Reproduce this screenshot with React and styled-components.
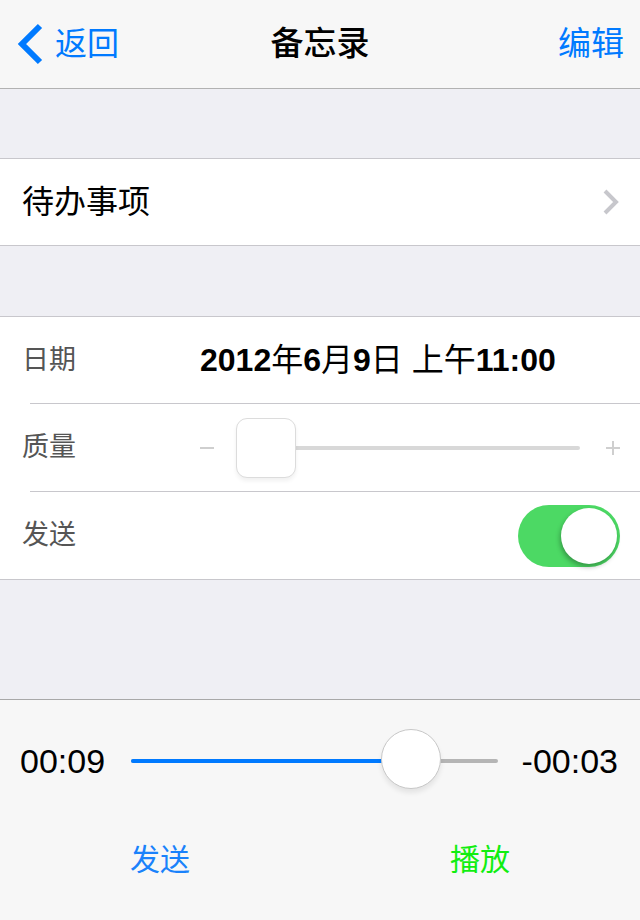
import React from 'react'
import styled, { createGlobalStyle } from 'styled-components'

const GlobalStyle = createGlobalStyle`
  html, body {
    margin: 0;
    padding: 0;
    background: #efeff4;
  }
  body {
    font-family: "Liberation Sans", "Noto Sans CJK SC", sans-serif;
    line-height: 1.2;
  }
`

const Page = styled.div`
  width: 640px;
  height: 920px;
  display: flex;
  flex-direction: column;
  background: #efeff4;
  overflow: hidden;
`

const NavBar = styled.div`
  height: 88px;
  flex-shrink: 0;
  display: grid;
  grid-template-columns: 1fr auto 1fr;
  align-items: center;
  background: #f7f7f7;
  border-bottom: 1px solid #b2b2b2;
`

const BackButton = styled.div`
  display: flex;
  align-items: center;
  gap: 12px;
  padding-left: 15px;
  color: #007aff;
  font-size: 32px;
`

const NavTitle = styled.div`
  font-size: 33px;
  font-weight: 500;
  color: #000;
`

const NavAction = styled.div`
  justify-self: end;
  padding-right: 16px;
  color: #007aff;
  font-size: 33px;
`

const Spacer = styled.div`
  height: ${p => p.h}px;
  flex-shrink: 0;
`

const Filler = styled.div`
  flex: 1;
`

const Group = styled.div`
  background: #fff;
  border-top: 1px solid #c8c7cc;
  border-bottom: 1px solid #c8c7cc;
  flex-shrink: 0;
`

const Row = styled.div`
  height: ${p => p.h || 86}px;
  display: flex;
  align-items: center;
  padding: 0 20px 0 22px;
`

const Divider = styled.div`
  height: 1px;
  margin-left: 30px;
  background: #c8c7cc;
`

const RowTitle = styled.div`
  flex: 1;
  font-size: 32px;
  color: #000;
`

const Label = styled.div`
  width: 178px;
  flex-shrink: 0;
  font-size: 27px;
  color: #555;
`

const DateValue = styled.div`
  font-size: 32px;
  color: #000;
`

const Num = styled.span`
  font-weight: 700;
`

const QualitySlider = styled.div`
  flex: 1;
  display: flex;
  align-items: center;
  gap: 22px;
`

const Sign = styled.div`
  width: 14px;
  height: 14px;
  position: relative;
  flex-shrink: 0;
  &::before {
    content: '';
    position: absolute;
    left: 0;
    right: 0;
    top: 6px;
    height: 2px;
    background: #cfcfcf;
  }
  &::after {
    content: '';
    display: ${p => (p.plus ? 'block' : 'none')};
    position: absolute;
    top: 0;
    bottom: 0;
    left: 6px;
    width: 2px;
    background: #cfcfcf;
  }
`

const SquareTrack = styled.div`
  flex: 1;
  height: 4px;
  border-radius: 2px;
  background: #d8d8d8;
  position: relative;
  margin-right: 4px;
`

const SquareThumb = styled.div`
  position: absolute;
  left: 0;
  top: -28px;
  width: 58px;
  height: 58px;
  border: 1px solid #dcdcdc;
  border-radius: 11px;
  background: #fff;
  box-shadow: 0 3px 4px rgba(0, 0, 0, 0.06);
`

const Toggle = styled.div`
  margin-left: auto;
  width: 102px;
  height: 62px;
  border-radius: 31px;
  background: #4cd964;
  display: flex;
  align-items: center;
  justify-content: flex-end;
  padding-right: 3px;
  box-sizing: border-box;
`

const Knob = styled.div`
  width: 56px;
  height: 56px;
  border-radius: 50%;
  background: #fff;
  box-shadow: -1px 3px 5px rgba(0, 0, 0, 0.3);
`

const Player = styled.div`
  height: 220px;
  flex-shrink: 0;
  background: #f7f7f7;
  border-top: 1px solid #a8a8a8;
  display: flex;
  flex-direction: column;
`

const TimeRow = styled.div`
  height: 122px;
  display: flex;
  align-items: center;
  padding: 0 22px 0 20px;
  gap: 26px;
`

const Time = styled.div`
  font-size: 34px;
  color: #000;
  flex-shrink: 0;
`

const Track = styled.div`
  flex: 1;
  height: 4px;
  border-radius: 2px;
  background: #b5b5b5;
  position: relative;
  margin-right: -2px;
`

const Fill = styled.div`
  height: 100%;
  border-radius: 2px;
  background: #007aff;
`

const RoundThumb = styled.div`
  position: absolute;
  top: -30px;
  width: 58px;
  height: 58px;
  margin-left: -29px;
  border: 1px solid #c8c8c8;
  border-radius: 50%;
  background: #fff;
  box-shadow: 0 4px 5px rgba(0, 0, 0, 0.08);
`

const Actions = styled.div`
  display: grid;
  grid-template-columns: 1fr 1fr;
  align-items: center;
  height: 76px;
`

const ActionButton = styled.div`
  text-align: center;
  font-size: 30px;
  color: ${p => p.color};
`

const BackChevron = () => (
  <svg width="28" height="42" viewBox="0 0 28 42">
    <polyline points="25,3 7,21 25,39" fill="none" stroke="#007aff" strokeWidth="6" />
  </svg>
)

const ChevronRight = () => (
  <svg width="18" height="26" viewBox="0 0 18 26">
    <polyline points="3,2 14,13 3,24" fill="none" stroke="#c7c7cc" strokeWidth="4" />
  </svg>
)

const progress = 76

export default function App() {
  return (
    <>
      <GlobalStyle />
      <Page>
        <NavBar>
          <BackButton>
            <BackChevron />
            <span>返回</span>
          </BackButton>
          <NavTitle>备忘录</NavTitle>
          <NavAction>编辑</NavAction>
        </NavBar>

        <Spacer h={69} />
        <Group>
          <Row>
            <RowTitle>待办事项</RowTitle>
            <ChevronRight />
          </Row>
        </Group>

        <Spacer h={70} />
        <Group>
          <Row>
            <Label>日期</Label>
            <DateValue>
              <Num>2012</Num>年<Num>6</Num>月<Num>9</Num>日 上午<Num>11:00</Num>
            </DateValue>
          </Row>
          <Divider />
          <Row h={87}>
            <Label>质量</Label>
            <QualitySlider>
              <Sign />
              <SquareTrack>
                <SquareThumb />
              </SquareTrack>
              <Sign plus />
            </QualitySlider>
          </Row>
          <Divider />
          <Row h={87}>
            <Label>发送</Label>
            <Toggle>
              <Knob />
            </Toggle>
          </Row>
        </Group>

        <Filler />

        <Player>
          <TimeRow>
            <Time>00:09</Time>
            <Track>
              <Fill style={{ width: `${progress}%` }} />
              <RoundThumb style={{ left: `${progress}%` }} />
            </Track>
            <Time>-00:03</Time>
          </TimeRow>
          <Actions>
            <ActionButton color="#1a82fb">发送</ActionButton>
            <ActionButton color="#11ee11">播放</ActionButton>
          </Actions>
        </Player>
      </Page>
    </>
  )
}
